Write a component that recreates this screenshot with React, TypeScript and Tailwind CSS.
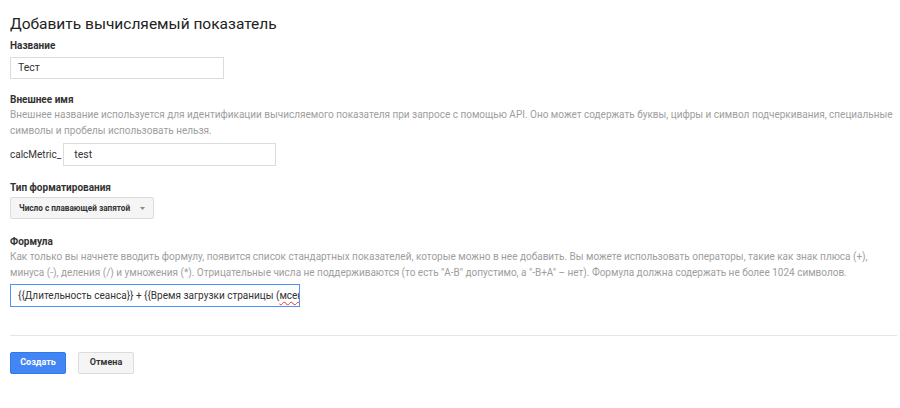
import React from 'react';

function Label({ children, className = '' }: { children: React.ReactNode; className?: string }) {
  return <div className={`text-[10px] leading-[14px] font-bold text-[#333] ${className}`}>{children}</div>;
}

function Hint({ children }: { children: React.ReactNode }) {
  return <div className="text-[10px] leading-[16px] text-[#9e9e9e] w-[885px]">{children}</div>;
}

export default function App() {
  return (
    <div className="h-[408px] w-[900px] bg-white pl-[10px] pt-[12px] font-['Roboto','Liberation_Sans',sans-serif] text-[#333]">
      <h1 className="text-[15.5px] leading-[24px] font-normal text-[#222]">Добавить вычисляемый показатель</h1>

      <Label className="mt-[3px]">Название</Label>
      <div className="mt-[4px] flex h-[22px] w-[214px] items-center border border-[#dcdcdc] px-[7px] text-[10.5px] text-[#333]">Тест</div>

      <Label className="mt-[14px]">Внешнее имя</Label>
      <Hint>
        Внешнее название используется для идентификации вычисляемого показателя при запросе с помощью API. Оно может содержать буквы, цифры и символ подчеркивания, специальные символы и пробелы использовать нельзя.
      </Hint>
      <div className="mt-[4px] flex items-center">
        <span className="text-[10px] leading-[22px] text-[#333]">calcMetric_</span>
        <div className="ml-[2px] flex h-[23px] w-[213px] items-center border border-[#dcdcdc] px-[10px] text-[10.5px] text-[#333]">test</div>
      </div>

      <Label className="mt-[15px]">Тип форматирования</Label>
      <div className="mt-[2px] flex h-[22px] w-[144px] items-center justify-between rounded-[2px] border border-[#dcdcdc] bg-[#f5f5f5] pl-[8px] pr-[8px]">
        <span className="whitespace-nowrap text-[8.2px] font-bold text-[#333]">Число с плавающей запятой</span>
        <svg width="5" height="3" viewBox="0 0 5 3"><path d="M0 0h5L2.5 3z" fill="#888" /></svg>
      </div>

      <Label className="mt-[16px]">Формула</Label>
      <Hint>
        Как только вы начнете вводить формулу, появится список стандартных показателей, которые можно в нее добавить. Вы можете использовать операторы, такие как знак плюса (+), минуса (-), деления (/) и умножения (*). Отрицательные числа не поддерживаются (то есть "A-B" допустимо, а "-B+A" – нет). Формула должна содержать не более 1024 символов.
      </Hint>
      <div className="mt-[3px] flex h-[23px] w-[290px] items-center overflow-hidden whitespace-nowrap border border-[#4d90fe] px-[7px] text-[10px] text-[#333]">
        <span>
          {'{{Длительность сеанса}} + {{Время загрузки страницы ('}
          <span className="underline decoration-wavy decoration-[#e53935] decoration-1 underline-offset-2">{'мсек)}}'}</span>
        </span>
      </div>

      <div className="mt-[28px] h-px w-[887px] bg-[#e5e5e5]" />

      <div className="mt-[16px] flex gap-[12px]">
        <button className="h-[22px] w-[56px] rounded-[2px] border border-[#3079ed] bg-[#4285f4] text-[9px] font-bold text-white">Создать</button>
        <button className="h-[22px] w-[56px] rounded-[2px] border border-[#dcdcdc] bg-[#f5f5f5] text-[9px] font-bold text-[#333]">Отмена</button>
      </div>
    </div>
  );
}
